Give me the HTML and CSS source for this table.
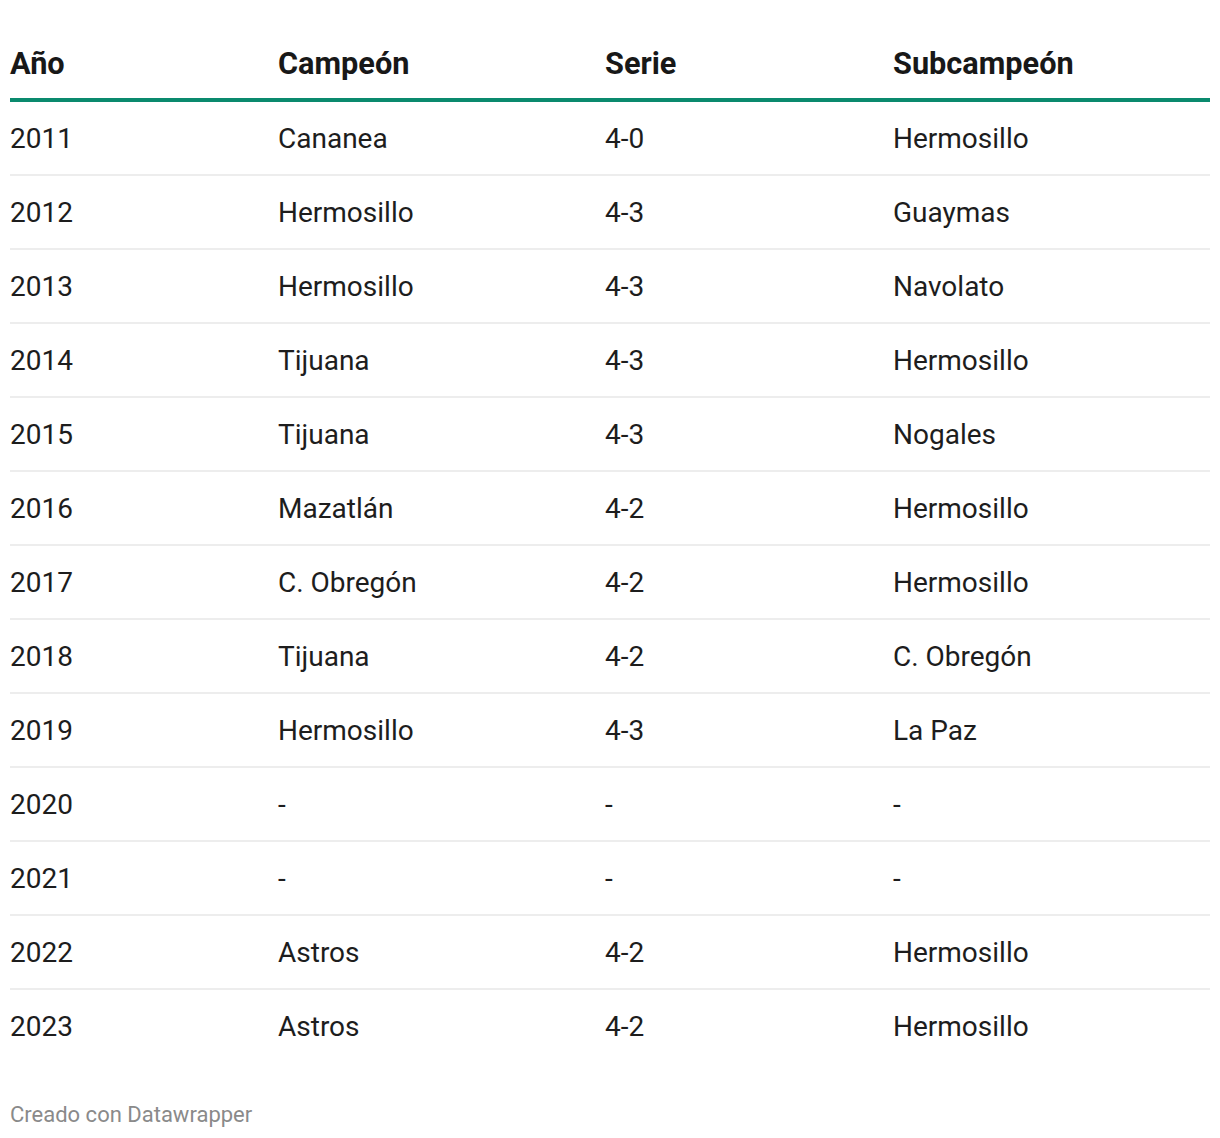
FILE: index.html
```html
<!DOCTYPE html>
<html lang="es">
<head>
<meta charset="utf-8">
<title>Campeones</title>
<link rel="stylesheet" href="styles.css">
</head>
<body>
<div class="wrap">
  <div class="tbl">
    <div class="row head"><div>Año</div><div>Campeón</div><div>Serie</div><div>Subcampeón</div></div>
    <div class="row"><div>2011</div><div>Cananea</div><div>4-0</div><div>Hermosillo</div></div>
    <div class="row"><div>2012</div><div>Hermosillo</div><div>4-3</div><div>Guaymas</div></div>
    <div class="row"><div>2013</div><div>Hermosillo</div><div>4-3</div><div>Navolato</div></div>
    <div class="row"><div>2014</div><div>Tijuana</div><div>4-3</div><div>Hermosillo</div></div>
    <div class="row"><div>2015</div><div>Tijuana</div><div>4-3</div><div>Nogales</div></div>
    <div class="row"><div>2016</div><div>Mazatlán</div><div>4-2</div><div>Hermosillo</div></div>
    <div class="row"><div>2017</div><div>C. Obregón</div><div>4-2</div><div>Hermosillo</div></div>
    <div class="row"><div>2018</div><div>Tijuana</div><div>4-2</div><div>C. Obregón</div></div>
    <div class="row"><div>2019</div><div>Hermosillo</div><div>4-3</div><div>La Paz</div></div>
    <div class="row"><div>2020</div><div>-</div><div>-</div><div>-</div></div>
    <div class="row"><div>2021</div><div>-</div><div>-</div><div>-</div></div>
    <div class="row"><div>2022</div><div>Astros</div><div>4-2</div><div>Hermosillo</div></div>
    <div class="row"><div>2023</div><div>Astros</div><div>4-2</div><div>Hermosillo</div></div>
  </div>
  <div class="foot">Creado con Datawrapper</div>
</div>
</body>
</html>
```
FILE: styles.css
```css
html, body {
  margin: 0;
  padding: 0;
  background: #ffffff;
}
body {
  font-family: Roboto, "Liberation Sans", sans-serif;
  color: #1d1d1d;
}
.wrap {
  padding: 0 10px;
  width: 1200px;
}
.row {
  display: grid;
  grid-template-columns: 268px 327px 288px 317px;
  align-items: center;
  height: 71px;
  padding-top: 1px;
  font-size: 28px;
  line-height: 34px;
  border-bottom: 2px solid #ededed;
}
.row:last-child {
  border-bottom: none;
}
.row.head {
  height: auto;
  align-items: end;
  font-size: 30.7px;
  font-weight: 700;
  color: #181818;
  line-height: 36px;
  padding-top: 46px;
  padding-bottom: 16px;
  border-bottom: 4px solid #0a8a6e;
}
.foot {
  margin-top: 40px;
  font-size: 22px;
  line-height: 26px;
  color: #8a8a8a;
}
```
